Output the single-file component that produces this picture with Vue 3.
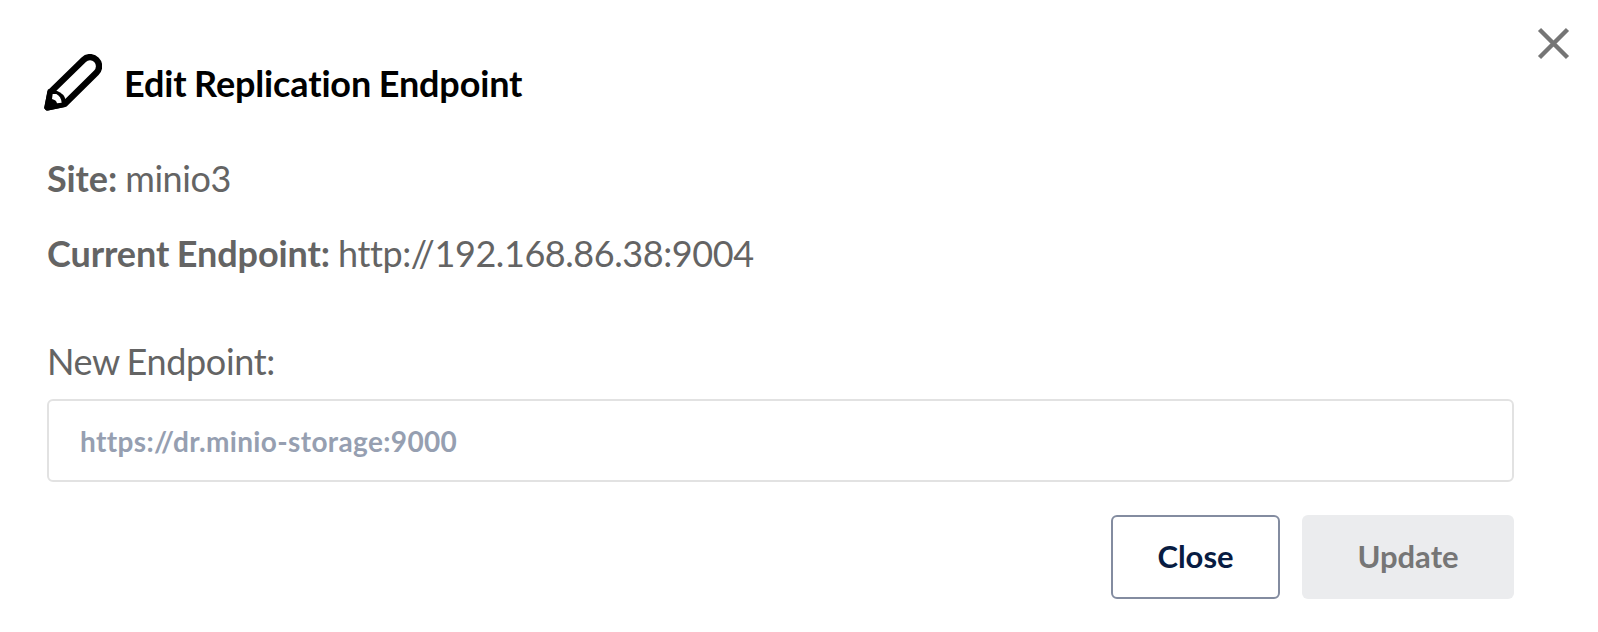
<script setup>
import { ref } from 'vue'

const site = 'minio3'
const current = 'http://192.168.86.38:9004'
const endpoint = ref('')
</script>

<template>
  <main class="dialog">
    <button class="dismiss" aria-label="Dismiss">
      <svg viewBox="0 0 33 33"><path d="M2.5 2.5 30.5 30.5M30.5 2.5 2.5 30.5" /></svg>
    </button>
    <header class="header">
      <svg class="pencil" viewBox="42 42 174 171">
        <path class="outline" d="M61 157 161 59A27 27 0 0 1 199 98L104 192L53 202Z" />
        <path class="tip" d="M54 148 80 152Q103 160 108 182L104 201L50 212L42 205Z" />
        <path class="shade" d="M68 162H79Q93 169 95 188L81 190Q79 180 66 177Z" />
      </svg>
      <h1 class="title">Edit Replication Endpoint</h1>
    </header>
    <section class="details">
      <p class="row"><strong>Site:</strong> <span class="value">{{ site }}</span></p>
      <p class="row"><strong>Current Endpoint:</strong> <span class="value">{{ current }}</span></p>
    </section>
    <label class="label" for="endpoint">New Endpoint:</label>
    <input id="endpoint" v-model="endpoint" class="field" placeholder="https://dr.minio-storage:9000" />
    <footer class="actions">
      <button class="button close">Close</button>
      <button class="button update" disabled>Update</button>
    </footer>
  </main>
</template>

<style>
body {
  margin: 0;
  background: #fff;
}
</style>

<style scoped>
.dialog {
  position: relative;
  box-sizing: border-box;
  width: 1598px;
  height: 632px;
  padding: 54px 84px 0 47px;
  overflow: hidden;
  font-family: Lato, sans-serif;
  font-size: 36px;
  line-height: 44px;
  font-variant-ligatures: none;
  color: #646464;
}
.dismiss {
  position: absolute;
  top: 27px;
  left: 1537px;
  width: 33px;
  height: 33px;
  padding: 0;
  border: 0;
  background: none;
}
.dismiss svg {
  display: block;
  fill: none;
  stroke: #757575;
  stroke-width: 4.4;
}
.header {
  display: flex;
  align-items: center;
  height: 57px;
  margin-left: -3px;
}
.pencil {
  width: 58px;
  height: 57px;
  margin-right: 22px;
}
.outline {
  fill: none;
  stroke: #000;
  stroke-width: 19;
  stroke-linejoin: round;
}
.tip {
  fill: #000;
}
.shade {
  fill: #fff;
}
.title {
  margin: 0;
  font-size: 36px;
  font-weight: 700;
  letter-spacing: -0.15px;
  word-spacing: -0.9px;
  color: #000;
}
.details {
  display: flex;
  flex-direction: column;
  gap: 31px;
  margin-top: 45px;
}
.row {
  margin: 0;
  letter-spacing: -0.1px;
  word-spacing: -1px;
}
.value {
  letter-spacing: -0.42px;
}
.label {
  display: block;
  margin-top: 64px;
  letter-spacing: -0.35px;
  word-spacing: -1.6px;
}
.field {
  display: block;
  box-sizing: border-box;
  width: 100%;
  height: 83px;
  margin-top: 16px;
  padding: 0 31px;
  border: 2px solid #e2e2e2;
  border-radius: 6px;
  outline: 0;
  font: 700 28px Lato, sans-serif;
  font-variant-ligatures: none;
  letter-spacing: 0.36px;
}
.field::placeholder {
  color: #969fb1;
  opacity: 1;
}
.actions {
  display: flex;
  justify-content: flex-end;
  gap: 22px;
  margin-top: 33px;
}
.button {
  box-sizing: border-box;
  height: 84px;
  padding: 0 0 2px;
  border-radius: 6px;
  font: 700 31px Lato, sans-serif;
}
.close {
  width: 169px;
  border: 2px solid #838ca0;
  background: #fff;
  color: #081c42;
}
.update {
  width: 212px;
  border: 0;
  background: #ebecee;
  color: #767676;
}
</style>
